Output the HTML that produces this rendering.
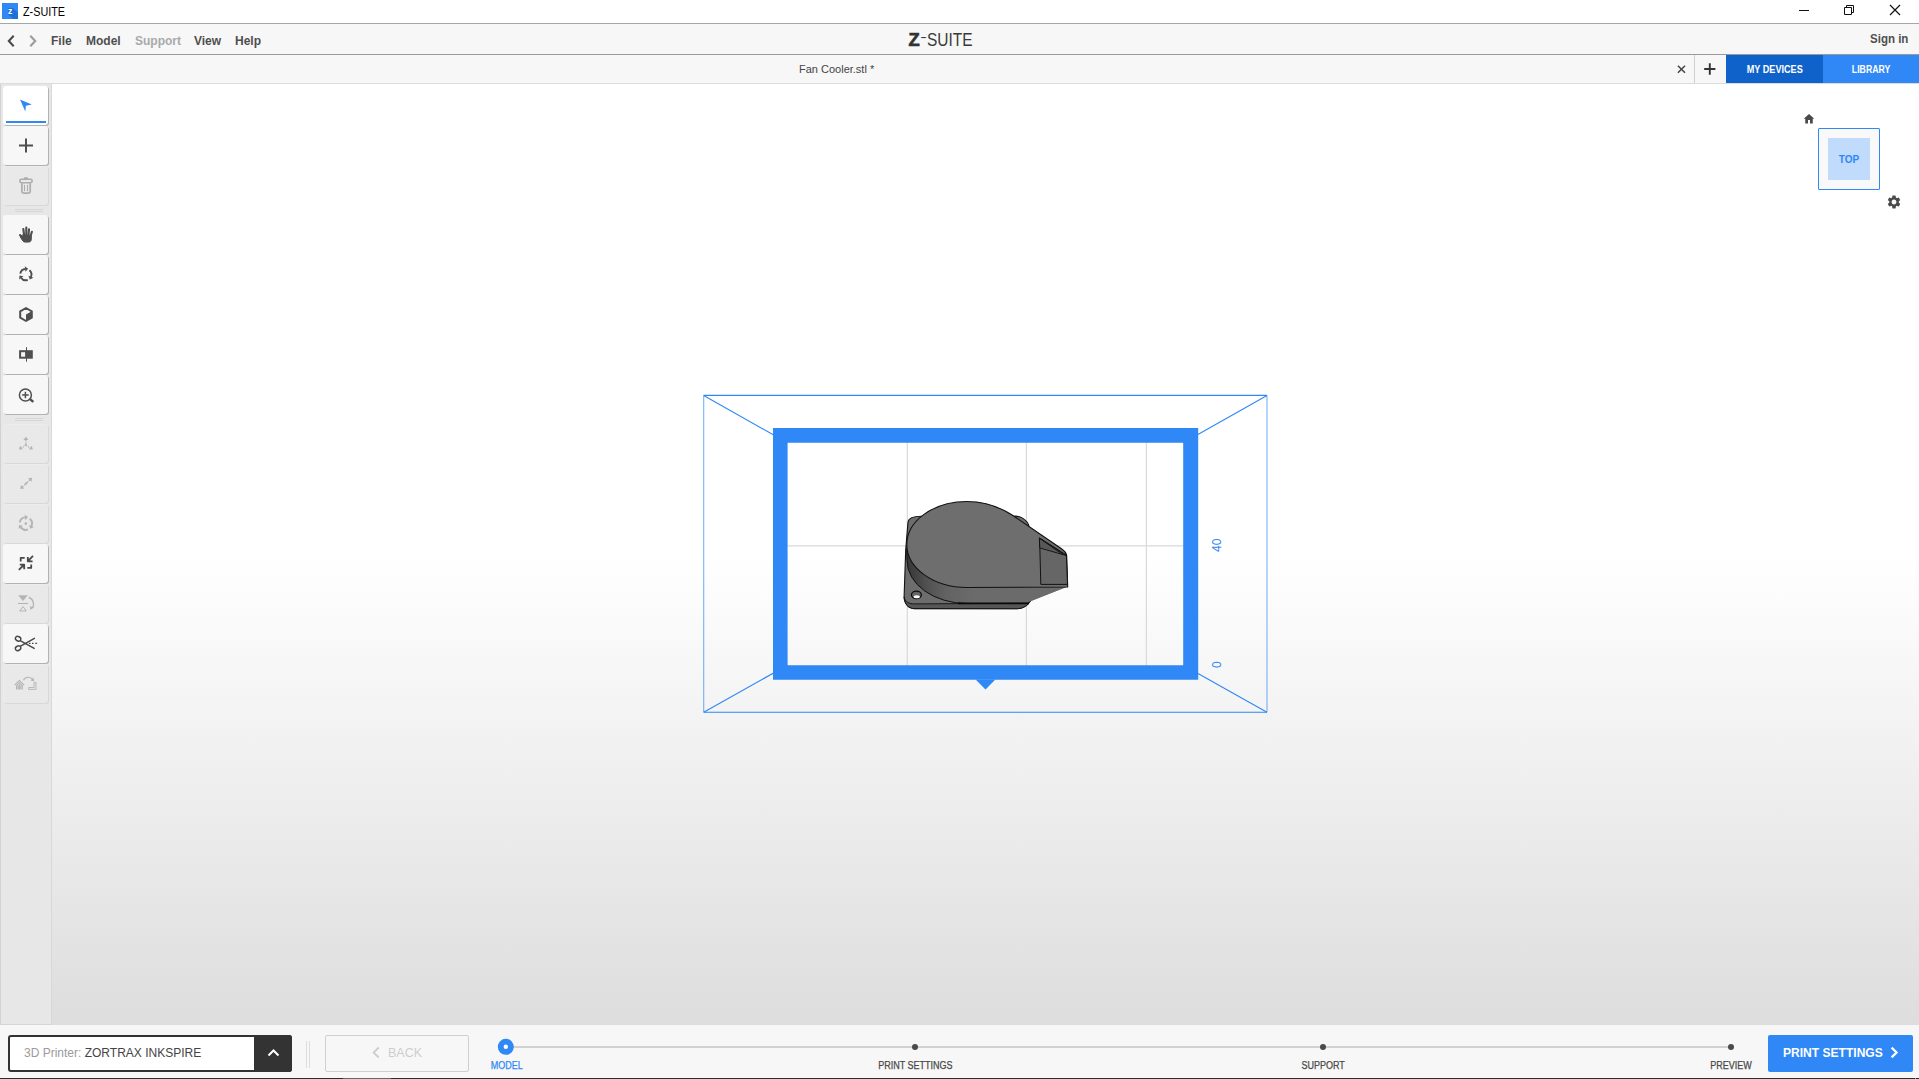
<!DOCTYPE html>
<html lang="en">
<head>
<meta charset="utf-8">
<title>Z-SUITE</title>
<style>
*{box-sizing:border-box;margin:0;padding:0}
html,body{width:1919px;height:1079px;overflow:hidden;background:#f7f7f7;font-family:"Liberation Sans",sans-serif;color:#4a4a4a}
.abs{position:absolute}
#titlebar{left:0;top:0;width:1919px;height:23px;background:#fff}
#titleline{left:0;top:23px;width:1919px;height:1px;background:#a6a6a6}
#appicon{left:2px;top:3px;width:16px;height:16px;background:#2f88f5;overflow:hidden}
#apptitle{left:23px;top:5px;font-size:12px;line-height:15px;color:#000;transform:scaleX(0.9);transform-origin:0 50%}
#menubar{left:0;top:24px;width:1919px;height:30px;background:#f7f7f7}
#menuline{left:0;top:54px;width:1919px;height:1px;background:#9a9a9a}
.menu{top:34px;font-size:12px;line-height:15px;font-weight:bold;color:#4e4e4e;white-space:nowrap}
#tabbar{left:0;top:55px;width:1919px;height:28px;background:#f7f7f7}
#tabline{left:0;top:83px;width:1919px;height:1px;background:#dcdcdc}
#tabname{left:799px;top:62px;font-size:11px;line-height:14px;color:#444;white-space:nowrap}
#btn-dev{left:1726px;top:55px;width:97px;height:28px;background:#0f62c9}
#btn-lib{left:1823px;top:55px;width:96px;height:28px;background:#2f88f5}
.tbtn{color:#fff;font-size:10px;font-weight:bold;text-align:center;line-height:30px;white-space:nowrap}
.tbtn span{display:inline-block}
#sidebar{left:0;top:84px;width:52px;height:941px;background:#e7e7e7;border-left:1px solid #d2d2d2;border-right:1px solid #d9d9d9;border-bottom:1px solid #d6d6d6}
.sb{left:3px;width:45px;height:39px;border-radius:3px;background:#f7f7f7;box-shadow:1px 1px 0 #b2b2b2}
.sb.dis{background:#e9e9e9;box-shadow:1px 1px 0 #d8d8d8,inset 1px 1px 0 #ececec}
.sb.act{background:#fff}
.sb svg{position:absolute;left:0;top:0;width:45px;height:39px}
.sep{left:15px;width:28px;height:1px;background:#d6d6d6}
#viewport{left:52px;top:84px;width:1867px;height:941px;background:linear-gradient(to bottom,#fff 0%,#fff 50%,#dddddd 100%)}
#bottombar{left:0;top:1025px;width:1919px;height:53px;background:#f7f7f7}
#bottomline{left:0;top:1078px;width:1919px;height:1px;background:#2b2b2b}

.sx{transform-origin:0 50%;display:inline-block}
#printer{left:8px;top:1035px;width:284px;height:37px;border:2px solid #333;border-radius:3px;background:#fff}
#printer-arrow{left:254px;top:1035px;width:38px;height:37px;background:#333;border-radius:0 3px 3px 0}
#printer-text{left:24px;top:1046px;font-size:12px;line-height:15px;white-space:nowrap;color:#444}
#printer-text span{color:#9b9b9b}
.vsep{top:1041px;width:1px;height:27px;background:#dedede}
#back{left:325px;top:1035px;width:144px;height:37px;border:1px solid #cfcfcf;border-radius:2px;background:#f7f7f7}
#back-text{left:388px;top:1046px;font-size:12.5px;line-height:15px;color:#cdcdcd;white-space:nowrap}
#stepline{left:506px;top:1046px;width:1225px;height:2px;background:#d2d2d2}
.dot{top:1044px;width:6px;height:6px;border-radius:3px;background:#4a4a4a}
.steplbl{top:1058.500px;-webkit-text-stroke:0.250px currentColor;width:120px;text-align:center;font-size:10px;line-height:13px;color:#4a4a4a;white-space:nowrap}
.steplbl span{display:inline-block;transform:scaleX(0.9)}
#next{left:1768px;top:1035px;width:144.800px;height:37px;border-radius:2px;background:#2f88f5}
#next-text{left:1783px;top:1045px;font-size:13px;line-height:15px;font-weight:bold;color:#fff;white-space:nowrap;transform:scaleX(0.927);transform-origin:0 50%}
#cube-outer{left:1818px;top:128px;width:62px;height:62px;border:1px solid #2f88f5;background:#f9f9f9;border-radius:1px}
#cube-inner{left:1828px;top:138px;width:42px;height:42px;background:#c0dbfb;color:#2f88f5;font-size:10px;font-weight:bold;text-align:center;line-height:43.500px}
</style>
</head>
<body>
<!-- title bar -->
<div id="titlebar" class="abs"></div>
<div id="apptitle" class="abs">Z-SUITE</div>
<div id="titleline" class="abs"></div>
<!-- menu bar -->
<div id="menubar" class="abs"></div>
<div class="abs menu" style="left:51px">File</div>
<div class="abs menu" style="left:86px">Model</div>
<div class="abs menu" style="left:135px;color:#a9a9a9">Support</div>
<div class="abs menu" style="left:194px">View</div>
<div class="abs menu" style="left:235px">Help</div>
<div class="abs menu" style="left:1870px;top:32px;transform:scaleX(0.96);transform-origin:0 50%">Sign in</div>
<div id="menuline" class="abs"></div>
<!-- tab bar -->
<div id="tabbar" class="abs"></div>
<div id="tabname" class="abs">Fan Cooler.stl *</div>
<div id="btn-dev" class="abs tbtn"><span style="transform:scaleX(0.91)">MY DEVICES</span></div>
<div id="btn-lib" class="abs tbtn"><span style="transform:scaleX(0.87)">LIBRARY</span></div>
<div id="tabline" class="abs"></div>
<!-- viewport -->
<div id="viewport" class="abs"></div>
<!-- top icons -->
<svg class="abs" style="left:0;top:0" width="1919" height="84" viewBox="0 0 1919 84">
<rect x="2" y="3" width="16" height="16" fill="#2f88f5"/>
<polygon points="8,8 13,8 18,13 18,19 13,19 8,14" fill="#1f6fd8"/>
<text x="10.100" y="13.800" text-anchor="middle" font-family="Liberation Sans, sans-serif" font-size="8.500" font-weight="bold" fill="#fff">z</text>
<path d="M13.700 35.800L8.800 41L13.700 46.200" fill="none" stroke="#4a4a4a" stroke-width="2.100"/>
<path d="M30.300 35.800L35.200 41L30.300 46.200" fill="none" stroke="#9c9c9c" stroke-width="2.100"/>
<!-- window controls -->
<g stroke="#111" stroke-width="1" fill="none">
<path d="M1799 10.500H1809"/>
<path d="M1844.500 7.500H1851.500V14.500H1844.500Z"/>
<path d="M1846.500 7.500V5.500H1853.500V12.500H1851.500"/>
<path d="M1890 5L1900 15M1900 5L1890 15" stroke-width="1.200"/>
</g>
<!-- tab controls -->
<path d="M1677.900 65.700L1685 72.800M1685 65.700L1677.900 72.800" stroke="#444" stroke-width="1.500" fill="none"/>
<path d="M1694.500 55V83" stroke="#cfcfcf" stroke-width="1"/>
<path d="M1704.200 69H1715.400M1709.800 63.300V74.700" stroke="#333" stroke-width="1.900" fill="none"/>
<!-- logo -->
<g font-family="Liberation Sans, sans-serif" fill="#333">
<text x="908.600" y="45.700" font-size="19.200" font-weight="bold" textLength="11.200" lengthAdjust="spacingAndGlyphs" stroke="#333" stroke-width="0.700">Z</text>
<text transform="translate(920.300,40.950) scale(1,0.700)" x="0" y="0" font-size="18" textLength="6.600" lengthAdjust="spacingAndGlyphs" fill="#3a3a3a">-</text>
<text x="927" y="45.700" font-size="19.200" textLength="45.600" lengthAdjust="spacingAndGlyphs" fill="#3a3a3a">SUITE</text>
</g>
</svg>
<svg class="abs" style="left:0;top:0" width="1919" height="1079" viewBox="0 0 1919 1079">
<defs>
<linearGradient id="wallg" gradientUnits="userSpaceOnUse" x1="905" y1="0" x2="975" y2="0">
<stop offset="0" stop-color="#343434"/><stop offset="0.3" stop-color="#505050"/><stop offset="0.6" stop-color="#636363"/><stop offset="1" stop-color="#6b6b6b"/>
</linearGradient>
</defs>
<!-- build volume -->
<g stroke="#2f88f5" stroke-width="1.1" fill="none">
<path d="M703.7 395.4H1267M703.700 712.200H1267"/><path d="M703.700 395.400V712.200M1267 395.400V712.200" stroke-opacity="0.650"/>
<path d="M703.7 395.4L787.500 442.800M1267 395.400L1183.300 442.800M703.700 712.200L787.500 665.200M1267 712.200L1183.300 665.200"/>
</g>
<!-- grid -->
<g stroke="#d9d9d9" stroke-width="1.200" fill="none">
<path d="M907.300 442V666M1026.400 442V666M1146.400 442V666M787 545.800H1184"/>
</g>
<!-- frame -->
<path fill="#2f88f5" fill-rule="evenodd" d="M773 428H1198.200V679.700H773ZM787.600 442.700V665.200H1183.200V442.700Z"/>
<polygon fill="#2f88f5" points="975.600,679.500 995.400,679.500 985.500,689.400"/>
<!-- axis labels -->
<g fill="#2f88f5" font-family="Liberation Sans, sans-serif" font-size="12" text-anchor="middle">
<text transform="translate(1221.300,545.300) rotate(-90)">40</text>
<text transform="translate(1221.300,664.600) rotate(-90)">0</text>
</g>
<g stroke-linejoin="round" stroke-linecap="round">
<!-- silhouette / base -->
<path fill="#6d6d6d" stroke="none" d="M922.300 516.300C914.500 516.200 908.500 518 908 522L905.700 550L904.100 597C904.500 604.500 909 608.600 914.500 608.600L1017.400 608.700C1022 608.700 1027 606 1030.400 601.300L1067.700 586.500L1066.700 556C1066.600 552.500 1064.500 550.800 1061.500 548.700L1029.100 526.300C1027 519.500 1020 515.300 1013.600 516.300Z"/>
<path fill="none" stroke="#111" stroke-width="1.100" d="M1029.100 526.300C1027 519.500 1020 515.300 1013.600 516.300M922.300 516.300C914.500 516.200 908.500 518 908 522L905.700 550L904.100 597C904.500 604.500 909 608.600 914.500 608.600L1017.400 608.700C1022 608.700 1027 606 1030.400 601.300"/>
<!-- base lower layer -->
<path fill="#565656" stroke="#111" stroke-width="0.900" d="M904.200 597.500C905 602 909 603.900 914.500 603.900L1029 603.200C1026 606.500 1022 608.700 1017.400 608.700L914.500 608.600C909 608.600 904.500 604.500 904.200 597.500Z"/>
<!-- side wall -->
<path fill="url(#wallg)" stroke="none" d="M906.800 548C906.800 552 906.800 556 907 560.500A59.800 43 0 0 0 966.800 603.500L1030.400 601.300L1067.700 586.500V586L966.800 587.500A60 43 0 0 1 906.800 548Z"/>
<path fill="none" stroke="#111" stroke-width="1" d="M906.800 548C906.800 552 906.800 556 907 560.500A59.800 43 0 0 0 966.800 603.500"/>
<path fill="none" stroke="#0a0a0a" stroke-width="1.800" stroke-linecap="butt" d="M958 603.300H1029"/>
<!-- top face -->
<path fill="#6e6e6e" stroke="#111" stroke-width="1.100" d="M966.800 587.500A60 43 0 0 1 906.800 544.500A60 43 0 0 1 966.800 501.500C985.800 501.500 1000.500 507.500 1012.500 515.200L1061.500 548.700C1064.500 550.800 1066.600 552.500 1066.700 556L1067.700 587Z"/>
<!-- outlet -->
<path fill="#666" stroke="#111" stroke-width="1" d="M1039.600 538.300L1040.800 584.400H1067.500L1066.400 555.500Z"/>
<path fill="#575757" stroke="#111" stroke-width="0.900" d="M1039.600 538.300L1066.100 555.500L1040.200 548.100Z"/>
<path fill="none" stroke="#111" stroke-width="0.900" d="M1039.600 538.300L1062.500 554.300"/>
<!-- hole -->
<ellipse cx="916.400" cy="594.800" rx="5" ry="3.700" fill="#646464" stroke="#0c0c0c" stroke-width="1.300"/>
<ellipse cx="916.700" cy="596.800" rx="3.100" ry="1.500" fill="#fff"/>
</g>

</svg>

<!-- nav cube -->
<div id="cube-outer" class="abs"></div>
<div id="cube-inner" class="abs">TOP</div>
<svg class="abs" style="left:1803px;top:113px" width="12" height="12" viewBox="0 0 24 24"><path fill="#4a4a4a" d="M10 21v-7h4v7h5.500v-9.500h3L12 2 1.500 11.500h3V21z"/></svg>
<svg class="abs" style="left:1886.200px;top:193.900px" width="16" height="16" viewBox="0 0 24 24"><path fill="#4a4a4a" d="M19.140 12.940c.040-.300.060-.610.060-.940 0-.320-.020-.640-.070-.940l2.030-1.580c.180-.140.230-.410.120-.610l-1.920-3.320c-.120-.220-.370-.290-.590-.220l-2.390.960c-.500-.380-1.030-.700-1.620-.940l-.360-2.540c-.040-.240-.240-.410-.480-.410h-3.840c-.240 0-.430.170-.470.410l-.360 2.540c-.590.240-1.130.570-1.620.940l-2.390-.960c-.220-.080-.470 0-.590.220L2.740 8.870c-.120.210-.080.470.120.610l2.030 1.580c-.050.300-.090.630-.090.940s.020.640.070.940l-2.030 1.580c-.180.140-.230.410-.120.610l1.920 3.320c.120.220.370.290.590.220l2.390-.960c.500.380 1.030.700 1.620.940l.360 2.540c.050.240.240.410.480.410h3.840c.240 0 .440-.170.470-.410l.360-2.540c.590-.240 1.130-.560 1.620-.940l2.390.960c.220.080.470 0 .590-.220l1.920-3.320c.120-.220.070-.470-.120-.610l-2.010-1.580zM12 15.600c-1.980 0-3.600-1.620-3.600-3.600s1.620-3.600 3.600-3.600 3.600 1.620 3.600 3.600-1.620 3.600-3.600 3.600z"/></svg>

<!-- sidebar -->
<div id="sidebar" class="abs"></div>
<div class="abs sb act" style="top:86px"><svg viewBox="0 0 45 39"><polygon points="17,13.4 28.8,18.6 22.9,19.7 22.3,25.5" fill="#2f88f5"/><rect x="3" y="35" width="40" height="2" fill="#2f88f5"/></svg></div>
<div class="abs sb " style="top:126px"><svg viewBox="0 0 45 39"><path d="M16 19.4h14M23 12.4v14" stroke="#4f4f4f" stroke-width="2" fill="none"/></svg></div>
<div class="abs sb dis" style="top:166px"><svg viewBox="0 0 45 39"><g fill="none" stroke="#adadad"><rect x="16.800" y="13.300" width="12.400" height="3.400" rx="1.600" stroke-width="1.600"/><path d="M18.900 17.200v8.300c0 1 .600 1.600 1.600 1.600h5.100c1 0 1.600-.600 1.600-1.600v-8.300" stroke-width="1.700"/><path d="M21.500 19.300v5.400M24.500 19.300v5.400" stroke-width="1.100" stroke-linecap="round"/></g><rect x="21" y="11.200" width="4" height="2" rx=".500" fill="#adadad"/></svg></div>
<div class="abs sb " style="top:215px"><svg viewBox="0 0 45 39"><g transform="translate(0,0.500)" stroke="#4f4f4f" stroke-width="2.100" stroke-linecap="round" stroke-linejoin="round" fill="#4f4f4f"><path d="M20.300 13.500l.900 6.500M23.300 12.100v7.500M26 13.800l-.500 6M28.900 16.300l-1.500 4.800M17 19.600l3.600 3.600" fill="none"/><path d="M20.400 19.200l7.900 1.400v3.400c0 1.500-1.200 2.600-2.600 2.600h-3.600c-1 0-1.700-.400-2.300-1.200l-2.500-3.900z" stroke-width="1"/></g></svg></div>
<div class="abs sb " style="top:255px"><svg viewBox="0 0 45 39"><g fill="none" stroke="#4f4f4f" stroke-width="1.9"><path d="M17.29 18.63A5.6 5.6 0 0 1 22.51 14.01"/><path d="M26.40 15.31A5.6 5.6 0 0 1 27.79 22.14"/><path d="M24.72 24.86A5.6 5.6 0 0 1 18.10 22.65"/></g><g fill="#4f4f4f"><polygon points="25.10,13.68 21.79,11.36 22.45,16.72"/><polygon points="26.78,24.55 30.44,22.84 25.47,20.73"/><polygon points="16.52,20.57 16.17,24.60 20.48,21.35"/></g></svg></div>
<div class="abs sb " style="top:295px"><svg viewBox="0 0 45 39"><polygon points="23,13 28.8,16.3 28.8,22.7 23,26 17.2,22.7 17.2,16.3" fill="none" stroke="#4f4f4f" stroke-width="2" stroke-linejoin="round"/><polygon points="23,19.4 28.8,16.3 28.8,22.7 23,26" fill="#4f4f4f"/></svg></div>
<div class="abs sb " style="top:335px"><svg viewBox="0 0 45 39"><rect x="17.1" y="16.2" width="6" height="6.5" fill="none" stroke="#4f4f4f" stroke-width="2"/><rect x="23.5" y="15.2" width="6.3" height="8.5" fill="#4f4f4f"/><path d="M23.5 12.2v14.5" stroke="#4f4f4f" stroke-width="1"/></svg></div>
<div class="abs sb " style="top:375px"><svg viewBox="0 0 45 39"><circle cx="22.4" cy="20" r="6" fill="none" stroke="#4f4f4f" stroke-width="1.5"/><path d="M19.1 20h6.6M22.4 16.700v6.600" stroke="#4f4f4f" stroke-width="1.500" fill="none"/><path d="M27.200 24.400l2.400 1.900" stroke="#4f4f4f" stroke-width="2.400" stroke-linecap="round"/></svg></div>
<div class="abs sb dis" style="top:424px"><svg viewBox="0 0 45 39"><g stroke="#b4b4b4" stroke-width="1.2" fill="none" stroke-dasharray="1.5 1"><path d="M22.9 20v-5M22.9 21l-4.500 3M22.900 21l4.500 3"/></g><g fill="#b4b4b4"><polygon points="22.9,12.8 25.4,16 20.400,16"/><polygon points="16,25.600 17,21.800 19.800,25.200"/><polygon points="29.800,25.600 28.800,21.800 26,25.200"/><circle cx="22.900" cy="21" r="1.1"/></g></svg></div>
<div class="abs sb dis" style="top:464px"><svg viewBox="0 0 45 39"><g stroke="#b4b4b4" stroke-width="1.3" fill="none" stroke-dasharray="2 1.2"><path d="M19 23.400l8.500-8.200"/></g><g fill="#b4b4b4"><polygon points="17.300,25 17.800,21 21.300,24.500"/><polygon points="29,13.700 28.500,17.700 25,14.200"/><circle cx="23.100" cy="19.400" r="1.1"/></g></svg></div>
<div class="abs sb dis" style="top:504px"><svg viewBox="0 0 45 39"><g fill="none" stroke="#b4b4b4" stroke-width="1.9"><path d="M16.69 18.52A6.2 6.2 0 0 1 22.48 13.41"/><path d="M26.79 14.85A6.2 6.2 0 0 1 28.32 22.41"/><path d="M24.92 25.43A6.2 6.2 0 0 1 17.60 22.98"/></g><g fill="#b4b4b4"><polygon points="25.02,13.08 21.72,10.77 22.37,16.13"/><polygon points="27.33,24.78 30.99,23.08 26.02,20.97"/><polygon points="16.04,20.94 15.69,24.96 20.00,21.71"/><circle cx="22.8" cy="19.6" r="1.300"/></g></svg></div>
<div class="abs sb " style="top:544px"><svg viewBox="0 0 45 39"><g stroke="#4a4a4a" stroke-width="1.800" fill="none" stroke-linecap="butt" stroke-linejoin="round"><path d="M30 11.800l-4.800 5"/><path d="M24.800 13v4.300h4.800"/><path d="M21.700 13.900h-4v3.700"/><path d="M24.300 23.900h3.900v-3.500"/><path d="M15.800 25.800l5-4.800"/><path d="M16.800 20.700h4.400v4.500"/></g><g fill="#4a4a4a"><polygon points="24.800,17.300 24.800,14 28,17.300"/><polygon points="21.200,20.700 21.200,24 18,20.700"/></g></svg></div>
<div class="abs sb dis" style="top:584px"><svg viewBox="0 0 45 39"><polygon points="15.200,11.200 24.800,11.200 20,17" fill="#b4b4b4"/><path d="M14.900 19.500h10.200" stroke="#b4b4b4" stroke-width="1.100"/><polygon points="20,22.600 23.300,27 16.700,27" fill="none" stroke="#b4b4b4" stroke-width="1"/><path d="M26.400 13.500c3.800 2.200 5 6.300 3.300 10" fill="none" stroke="#b4b4b4" stroke-width="1.500" stroke-linecap="round"/><polygon points="27.100,22.200 31.100,23.300 27.100,26.100" fill="#b4b4b4"/></svg></div>
<div class="abs sb " style="top:624px"><svg viewBox="0 0 45 39"><g fill="none" stroke="#484848" stroke-width="1.400" stroke-linecap="round"><ellipse cx="15.100" cy="14.750" rx="2.800" ry="2.200" transform="rotate(25 15.100 14.750)"/><ellipse cx="15.100" cy="24.250" rx="2.800" ry="2.200" transform="rotate(-25 15.100 24.250)"/><path d="M17.600 16.800l13.600 7.600M17.600 22.100l13.800-7.800"/><path d="M26 19.400h1.500M29 19.400h1.500M32.300 19.400h1.700" stroke-width="1.100" stroke-linecap="butt"/></g></svg></div>
<div class="abs sb dis" style="top:664px"><svg viewBox="0 0 45 39"><g fill="none" stroke="#b4b4b4" stroke-width="1.100"><path d="M11.600 21.200l4.800-4.700 4.800 4.700"/><path d="M13.400 21.600l3-2.900 3 2.900"/><path d="M13.600 21.300v4.300M19.300 21.300v4.300M16.400 20v5.600M15.100 21.500v4M17.800 21.500v4"/><path d="M25.600 23.500h5.500v-4.900h1.900v6.800h-7.400z" stroke-width="0.900"/><path d="M20.400 16.300c2-4 7-4 9.400-.500" stroke-width="1.200"/></g><polygon points="31.300,17.400 27.700,16.600 30.400,13.600" fill="#b4b4b4"/></svg></div>
<div class="abs sep" style="top:209px"></div>
<div class="abs sep" style="top:211px"></div>
<div class="abs sep" style="top:418px"></div>
<div class="abs sep" style="top:420px"></div>

<!-- bottom bar -->
<div id="bottombar" class="abs"></div>
<div id="printer" class="abs"></div>
<div id="printer-arrow" class="abs"><svg width="38" height="37" viewBox="0 0 38 37"><path d="M14.500 20.500L19.500 15.500L24.500 20.500" fill="none" stroke="#fff" stroke-width="2"/></svg></div>
<div id="printer-text" class="abs"><span>3D Printer:</span> ZORTRAX INKSPIRE</div>
<div class="abs vsep" style="left:306px"></div>
<div class="abs vsep" style="left:309px"></div>
<div id="back" class="abs"></div>
<svg class="abs" style="left:370px;top:1045px" width="12" height="15" viewBox="0 0 12 15"><path d="M8.800 2.500L3.600 7.500L8.800 12.500" fill="none" stroke="#cdcdcd" stroke-width="1.800"/></svg>
<div id="back-text" class="abs">BACK</div>
<div id="stepline" class="abs"></div>
<svg class="abs" style="left:497px;top:1038px" width="18" height="18" viewBox="0 0 18 18"><circle cx="8.800" cy="8.800" r="8" fill="#2f88f5"/><circle cx="8.800" cy="8.800" r="2.200" fill="#fff"/></svg>
<div class="abs dot" style="left:912px"></div>
<div class="abs dot" style="left:1319.500px"></div>
<div class="abs dot" style="left:1728px"></div>
<div class="abs steplbl" style="left:447px;color:#2f88f5"><span>MODEL</span></div>
<div class="abs steplbl" style="left:855px"><span>PRINT SETTINGS</span></div>
<div class="abs steplbl" style="left:1263px"><span>SUPPORT</span></div>
<div class="abs steplbl" style="left:1671px"><span>PREVIEW</span></div>
<div id="next" class="abs"></div>
<div id="next-text" class="abs">PRINT SETTINGS</div>
<svg class="abs" style="left:1888px;top:1045px" width="12" height="15" viewBox="0 0 12 15"><path d="M3.600 2.600L8.600 7.500L3.600 12.400" fill="none" stroke="#fff" stroke-width="2.200"/></svg>
<div id="bottomline" class="abs"></div>
<div class="abs" style="left:343px;top:1078px;width:48px;height:1px;background:#666"></div>
<div class="abs" style="left:1915px;top:1078px;width:1px;height:1px;background:#999"></div>
</body>
</html>
